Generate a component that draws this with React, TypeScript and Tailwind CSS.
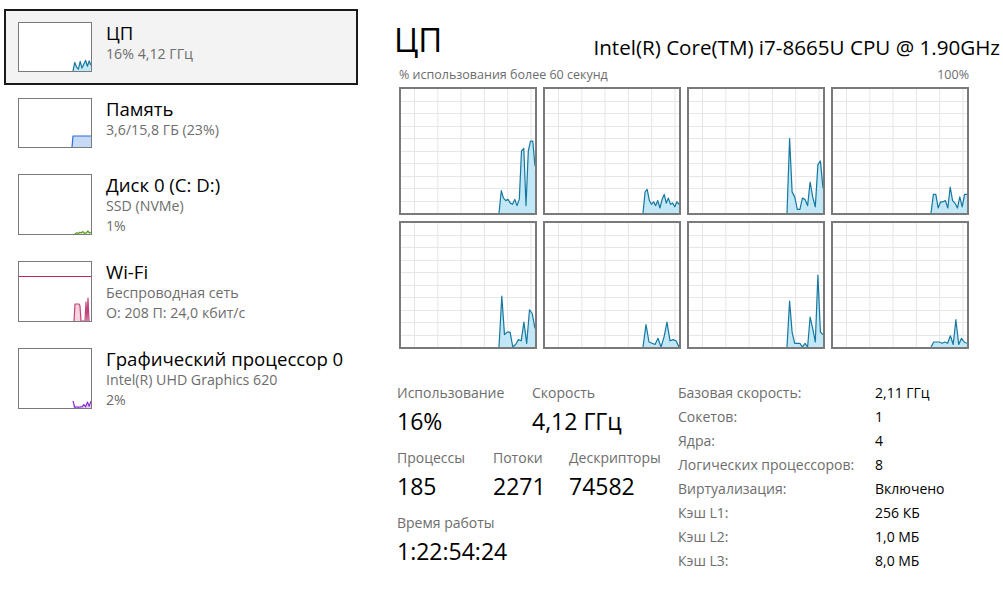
import React from 'react';

type Pt = [number, number];

// per-core history tail, % load, drawn from x=98 to the right edge
const cores: number[][] = [
  [0, 18, 12, 10, 11, 8, 7, 11, 6, 11, 50, 52, 6, 50, 58, 58, 38],
  [0, 17, 19, 10, 7, 9, 6, 10, 4, 11, 15, 8, 12, 7, 8, 5, 9, 7],
  [0, 60, 17, 13, 3, 3, 12, 11, 6, 25, 13, 5, 39, 42, 20],
  [0, 15, 15, 4, 9, 9, 10, 4, 21, 10, 8, 4, 13, 5, 15, 15],
  [0, 41, 10, 12, 12, 0, 2, 6, 5, 20, 3, 30, 27, 15],
  [0, 18, 4, 3, 2, 7, 0, 8, 20, 5, 6, 5, 0],
  [0, 37, 12, 3, 3, 3, 0, 3, 0, 24, 15, 4, 58, 12, 10],
  [0, 4, 4, 4, 3, 4, 3, 9, 2, 22, 2, 7, 4, 3],
];

const GW = 134;
const GH = 124;

function toPoints(vals: number[], x0: number, x1: number, h: number): Pt[] {
  const step = (x1 - x0) / (vals.length - 1);
  return vals.map((v, i) => [x0 + i * step, h - (v / 100) * h]);
}

function Area({ pts, h, stroke, fill }: { pts: Pt[]; h: number; stroke: string; fill: string }) {
  const line = pts.map((p) => `${p[0].toFixed(1)},${p[1].toFixed(1)}`).join(' ');
  const first = pts[0];
  const last = pts[pts.length - 1];
  return (
    <>
      <polygon points={`${first[0]},${h} ${line} ${last[0]},${h}`} fill={fill} />
      <polyline points={line} fill="none" stroke={stroke} strokeWidth={1.2} strokeLinejoin="round" />
    </>
  );
}

function CoreGraph({ data }: { data: number[] }) {
  const vlines = [0, 1, 2, 3, 4, 5].map((k) => 13.5 + k * 23.3);
  const hlines = [1, 2, 3, 4, 5, 6, 7, 8, 9].map((k) => Math.round(k * 12.5) - 0.5);
  return (
    <div className="w-[138px] h-[128px] border-2 border-[#7a7a7a] bg-white">
      <svg width={GW} height={GH} viewBox={`0 0 ${GW} ${GH}`} className="block">
        {vlines.map((x) => (
          <line key={'v' + x} x1={x} y1={0} x2={x} y2={GH} stroke="#e6e6e6" strokeWidth={1} />
        ))}
        {hlines.map((y) => (
          <line key={'h' + y} x1={0} y1={y} x2={GW} y2={y} stroke="#e6e6e6" strokeWidth={1} />
        ))}
        <Area pts={toPoints(data, 98, GW, GH)} h={GH} stroke="#17789f" fill="#c2e7f6" />
      </svg>
    </div>
  );
}

function Thumb({ tall, children }: { tall?: boolean; children?: React.ReactNode }) {
  const h = tall ? 59 : 48;
  return (
    <div className={`w-[74px] ${tall ? 'h-[61px]' : 'h-[50px]'} border border-[#7a7a7a] bg-white shrink-0`}>
      <svg width={72} height={h} viewBox={`0 0 72 ${h}`} className="block">
        {children}
      </svg>
    </div>
  );
}

function SideItem({
  title,
  lines,
  thumb,
  selected,
}: {
  title: string;
  lines: string[];
  thumb: React.ReactNode;
  selected?: boolean;
}) {
  return (
    <div
      className={`flex gap-[14px] pl-[12px] pt-[11px] ${lines.length > 1 ? 'h-[87px]' : 'h-[76px]'} ${
        selected ? 'bg-[#f3f3f3] border-2 border-[#1a1a1a]' : 'border-2 border-transparent'
      }`}
    >
      {thumb}
      <div className="flex flex-col">
        <div className="text-[18.6px] leading-[22px] text-black">{title}</div>
        {lines.map((l) => (
          <div key={l} className="text-[14.2px] leading-[20px] text-[#6d6d6d]">
            {l}
          </div>
        ))}
      </div>
    </div>
  );
}

const specs: [string, string][] = [
  ['Базовая скорость:', '2,11 ГГц'],
  ['Сокетов:', '1'],
  ['Ядра:', '4'],
  ['Логических процессоров:', '8'],
  ['Виртуализация:', 'Включено'],
  ['Кэш L1:', '256 КБ'],
  ['Кэш L2:', '1,0 МБ'],
  ['Кэш L3:', '8,0 МБ'],
];

function Stat({ label, value, className }: { label: string; value: string; className?: string }) {
  return (
    <div className={className}>
      <div className="text-[14px] leading-[20px] text-[#6d6d6d]">{label}</div>
      <div className="text-[23px] leading-[36px] text-black">{value}</div>
    </div>
  );
}

export default function App() {
  return (
    <div className="w-[1003px] h-[599px] bg-white flex font-['Open_Sans','Noto_Sans',sans-serif] overflow-hidden">
      {/* Sidebar */}
      <aside className="w-[358px] pl-[4px] pt-[9px] shrink-0">
        <SideItem
          selected
          title="ЦП"
          lines={['16% 4,12 ГГц']}
          thumb={
            <Thumb>
              <Area
                pts={toPoints([0, 18, 8, 4, 20, 6, 14, 22, 10, 21, 12], 54, 72, 48)}
                h={48}
                stroke="#17789f"
                fill="#c2e7f6"
              />
            </Thumb>
          }
        />
        <SideItem
          title="Память"
          lines={['3,6/15,8 ГБ (23%)']}
          thumb={
            <Thumb>
              <Area
                pts={[
                  [53, 48],
                  [54, 37],
                  [72, 37],
                ]}
                h={48}
                stroke="#2a6fd8"
                fill="#c6daf6"
              />
            </Thumb>
          }
        />
        <SideItem
          title="Диск 0 (C: D:)"
          lines={['SSD (NVMe)', '1%']}
          thumb={
            <Thumb tall>
              <Area
                pts={toPoints([0, 2, 1, 3, 2, 4, 1, 2, 5, 2, 3], 56, 72, 59)}
                h={59}
                stroke="#5c9a24"
                fill="#dcefc9"
              />
            </Thumb>
          }
        />
        <SideItem
          title="Wi-Fi"
          lines={['Беспроводная сеть', 'О: 208 П: 24,0 кбит/с']}
          thumb={
            <Thumb tall>
              <line x1={0} y1={14.5} x2={72} y2={14.5} stroke="#b8285a" strokeWidth={1.2} />
              <Area
                pts={[
                  [55, 59],
                  [56, 42],
                  [60, 42],
                  [61, 44],
                  [62, 59],
                  [66, 59],
                  [67, 40],
                  [68, 59],
                  [69, 36],
                  [70, 59],
                ]}
                h={59}
                stroke="#c2457a"
                fill="#f5d3df"
              />
            </Thumb>
          }
        />
        <SideItem
          title="Графический процессор 0"
          lines={['Intel(R) UHD Graphics 620', '2%']}
          thumb={
            <Thumb tall>
              <Area
                pts={toPoints([12, 1, 2, 1, 2, 2, 6, 2, 10, 3, 12], 54, 72, 59)}
                h={59}
                stroke="#8a2fd6"
                fill="#e4d2f6"
              />
            </Thumb>
          }
        />
      </aside>

      {/* Detail pane */}
      <main className="flex-1 pl-[36px] pr-[3px] flex flex-col">
        <div className="flex items-end justify-between h-[65px] pb-[5px]">
          <div className="text-[33px] leading-[40px] text-black">ЦП</div>
          <div className="text-[20.6px] leading-[26px] text-black">Intel(R) Core(TM) i7-8665U CPU @ 1.90GHz</div>
        </div>

        <div className="ml-[5px] w-[570px]">
          <div className="flex justify-between text-[12.5px] leading-[24px] text-[#6d6d6d] mt-[-2px]">
            <span>% использования более 60 секунд</span>
            <span>100%</span>
          </div>
          <div className="grid grid-cols-4 gap-x-[6px] gap-y-[6px] w-[570px]">
            {cores.map((c, i) => (
              <CoreGraph key={i} data={c} />
            ))}
          </div>
        </div>

        <div className="flex mt-[34px]">
          <div className="w-[284px] pl-[3px] flex flex-col gap-[9px]">
            <div className="flex">
              <Stat label="Использование" value="16%" className="w-[135px]" />
              <Stat label="Скорость" value="4,12 ГГц" />
            </div>
            <div className="flex">
              <Stat label="Процессы" value="185" className="w-[96px]" />
              <Stat label="Потоки" value="2271" className="w-[76px]" />
              <Stat label="Дескрипторы" value="74582" />
            </div>
            <Stat label="Время работы" value="1:22:54:24" />
          </div>
          <div className="flex flex-col text-[14px] leading-[24px] mt-[-2px]">
            {specs.map(([k, v]) => (
              <div key={k} className="flex">
                <span className="w-[197px] text-[#6d6d6d]">{k}</span>
                <span className="text-black">{v}</span>
              </div>
            ))}
          </div>
        </div>
      </main>
    </div>
  );
}
